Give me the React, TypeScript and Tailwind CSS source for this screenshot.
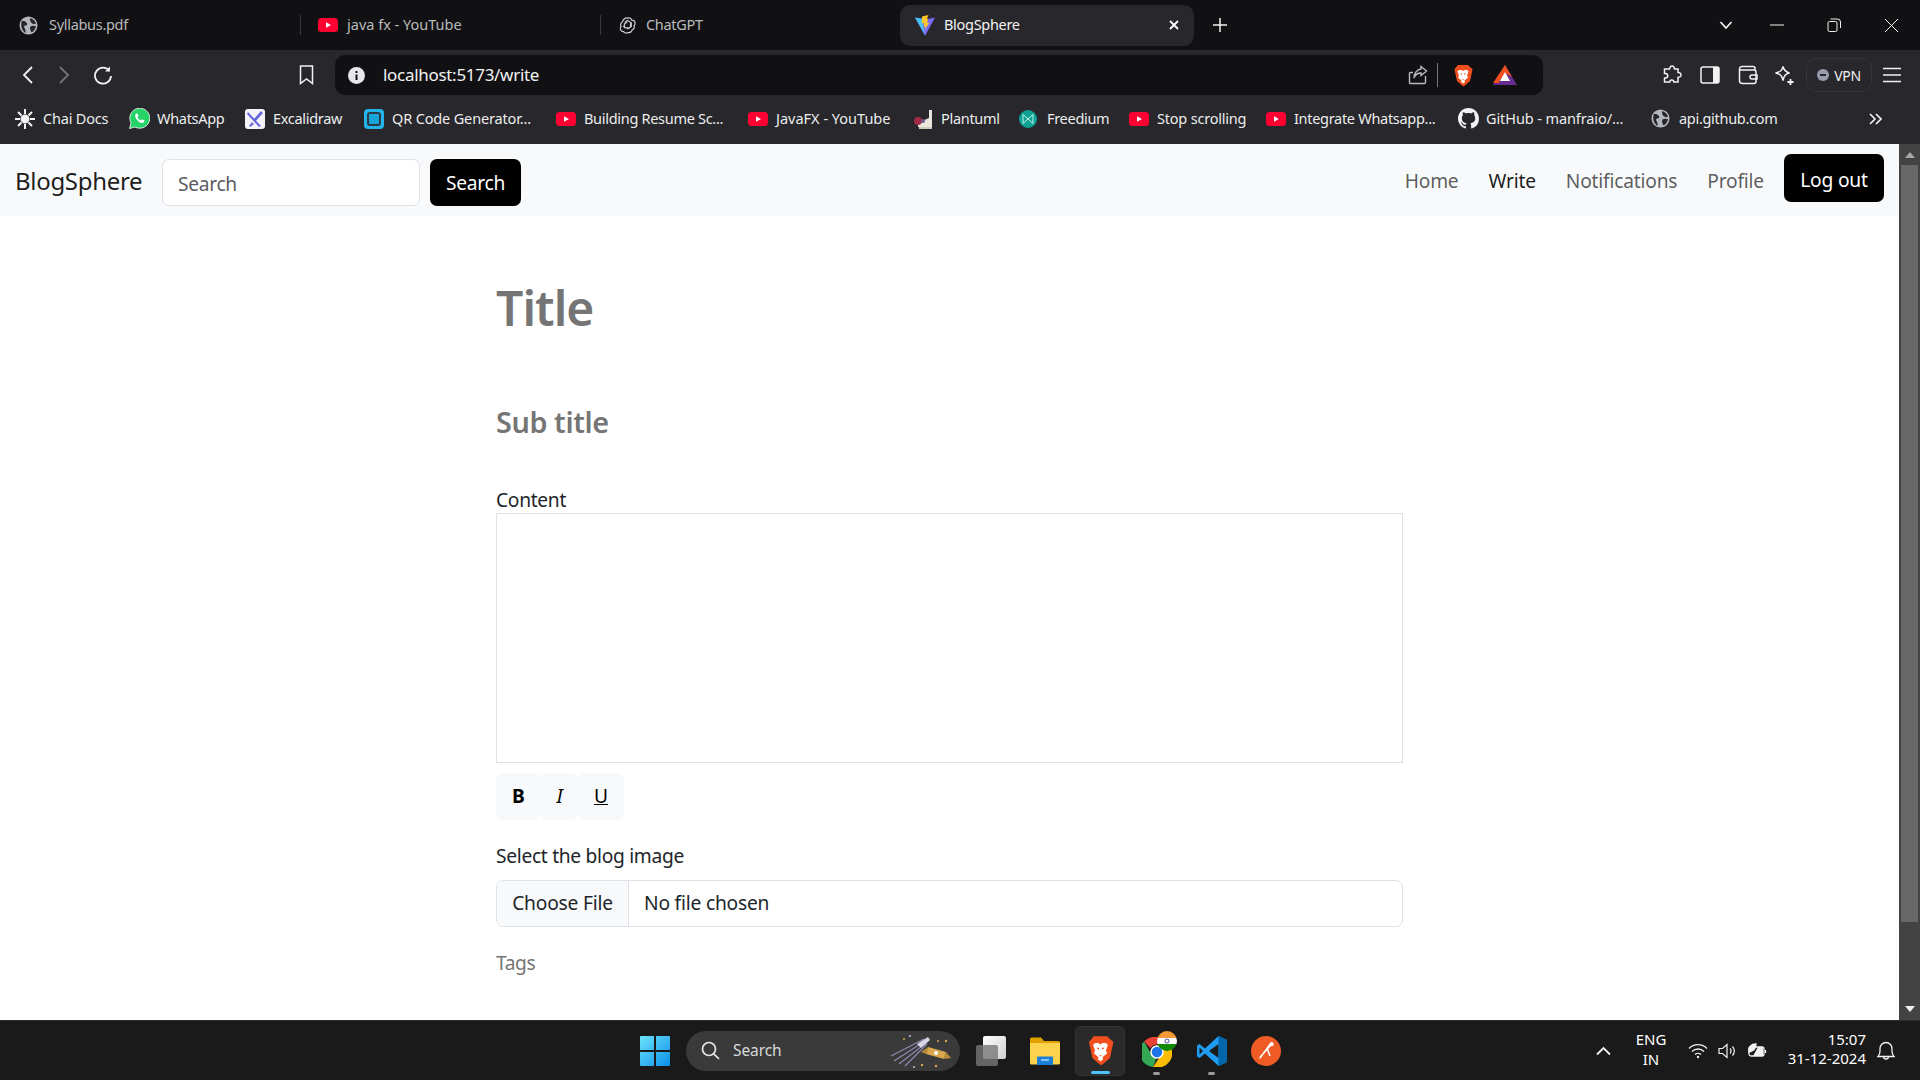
import { ReactNode } from "react";

const ui = "font-['Noto_Sans',sans-serif]";

function YouTube({ size = 20 }: { size?: number }) {
  return (
    <svg width={size} height={size} viewBox="0 0 20 20" className="shrink-0">
      <rect x="0" y="3" width="20" height="14" rx="3.5" fill="#ff0033" />
      <path d="M8 7.2 13 10 8 12.8Z" fill="#fff" />
    </svg>
  );
}

function Globe({ size = 19 }: { size?: number }) {
  return (
    <svg width={size} height={size} viewBox="0 0 20 20" className="shrink-0">
      <circle cx="10" cy="10" r="9.5" fill="#b4b6bb" />
      <path d="M3 5c3 0 4 1 5 2s1 3-1 3-2 2-1 3 1 4 1 5C4 16 1 12 3 5ZM12 2c3 1 5 3 6 6-2 1-4 0-5-1s-2-3-1-5ZM12 11c2-1 4-1 6 0-1 3-3 6-5 6-1-2-2-4-1-6Z" fill="#26272c" />
    </svg>
  );
}

function GptIcon() {
  return (
    <svg width="19" height="19" viewBox="0 0 20 20" fill="none" stroke="#c9cacd" strokeWidth="1.3" className="shrink-0">
      <path d="M10 2.2c2-.6 4 .4 4.6 2.2 2-.1 3.5 1.400 3.300 3.400 0 1-.5 1.800-1 2.300.8 2-.2 4-2 4.600-.5 2-2.400 3.200-4.300 2.700-1.500 1-3.800.6-4.800-1-2 0-3.500-1.600-3.300-3.500 0-.8.3-1.500.7-2-1-1.800-.2-4 1.600-4.800C5.300 3.400 7.800 1.500 10 2.200Z" />
      <path d="M7 6.500 10 4.800l4 2.300v4.500M13.200 7.300v4.400l-3.500 2M12.800 12.600H8L5.300 10.500M6.800 13V8.200l3-1.700" />
    </svg>
  );
}

function ViteIcon() {
  return (
    <svg width="22" height="22" viewBox="0 0 22 22" className="shrink-0">
      <path d="M1 3.500 11 5.500 21 3.500 11.500 21a.6.6 0 0 1-1 0Z" fill="#7c6cf5" />
      <path d="M1 3.500 8 4.800 10.500 20Z" fill="#43c4f5" />
      <path d="M14.500 1 8 2.500l-.3 7 2.500-.5-.7 4 2-1-.5 3.500 4.500-7-2.500.5 1.200-4.500-1.400.3Z" fill="#ffc628" />
    </svg>
  );
}

function BraveIcon({ size = 20 }: { size?: number }) {
  return (
    <svg width={size} height={size * 1.15} viewBox="0 0 20 23" className="shrink-0">
      <path d="M5 1h10l2.500 2.500L19.500 5l-.5 3-.5 2-1.500 7-4 3.500-2.500 2-2.500-2L4 17l-1.500-7L2 8l-.5-3L3 3.500Z" fill="#f1501e" />
      <path d="M6 6h2.500L10 7l1.500-1H14l1.500 1.500-1.500 4 1 2-3.500 3 .5 1.500-2 1.500-2-1.500.5-1.500-3.500-3 1-2-1.500-4Z" fill="#fff" />
      <path d="M7 9.500h2.200L8.500 11ZM13 9.500h-2.200l.7 1.500ZM9 15h2l-1 1Z" fill="#f1501e" />
    </svg>
  );
}

function Bookmark({ icon, label, className, track = "tracking-[-0.3px]" }: { icon: ReactNode; label: string; className: string; track?: string }) {
  return (
    <div className={`flex items-center shrink-0 ${className}`}>
      <div className="w-[28px] flex items-center">{icon}</div>
      <span className={`text-[14.500px] whitespace-nowrap text-[#eceded] ${track}`}>{label}</span>
    </div>
  );
}

function TabBar() {
  return (
    <div className="h-[50px] bg-[#111113] flex items-center shrink-0 text-[14.500px] tracking-[-0.3px]">
      <div className="w-[300px] flex items-center pl-[19px] gap-[11px] text-[#b9babd]">
        <Globe />
        <span>Syllabus.pdf</span>
      </div>
      <div className="w-px h-[20px] bg-[#3a3a3e]" />
      <div className="w-[299px] flex items-center pl-[17px] gap-[9px] text-[#b9babd]">
        <YouTube />
        <span className="tracking-normal">java fx - YouTube</span>
      </div>
      <div className="w-px h-[20px] bg-[#3a3a3e]" />
      <div className="w-[298px] flex items-center pl-[17px] gap-[9px] text-[#b9babd]">
        <GptIcon />
        <span>ChatGPT</span>
      </div>
      <div className="w-[294px] h-[41px] ml-px rounded-[10px] bg-[#27272c] flex items-center pl-[14px] pr-[14px] gap-[8px] text-[#f2f2f3]">
        <ViteIcon />
        <span>BlogSphere</span>
        <svg width="12" height="12" viewBox="0 0 12 12" stroke="#fff" strokeWidth="1.800" className="ml-auto">
          <path d="M2 2l8 8M10 2l-8 8" />
        </svg>
      </div>
      <svg width="16" height="16" viewBox="0 0 16 16" stroke="#f2f2f3" strokeWidth="1.500" className="ml-[18px]">
        <path d="M8 1v14M1 8h14" />
      </svg>
      <div className="ml-auto flex items-center text-[#f2f2f3]">
        <svg width="14" height="10" viewBox="0 0 14 10" fill="none" stroke="currentColor" strokeWidth="1.800">
          <path d="M1.500 2 7 8l5.500-6" />
        </svg>
        <svg width="14" height="2" viewBox="0 0 14 2" stroke="currentColor" className="ml-[37px]">
          <path d="M0 1h14" />
        </svg>
        <svg width="14" height="14" viewBox="0 0 14 14" fill="none" stroke="currentColor" className="ml-[43px]">
          <rect x="1" y="3.500" width="9" height="10" rx="1.500" />
          <path d="M3.500 1h7a3 3 0 0 1 3 3v6" />
        </svg>
        <svg width="15" height="15" viewBox="0 0 15 15" stroke="currentColor" className="ml-[43px] mr-[21px]">
          <path d="M1 1l13 13M14 1 1 14" />
        </svg>
      </div>
    </div>
  );
}

function Toolbar() {
  return (
    <div className="h-[45px] bg-[#27272c] flex items-center shrink-0 pt-[5px]">
      <svg width="12" height="20" viewBox="0 0 12 20" fill="none" stroke="#f2f2f3" strokeWidth="1.800" className="ml-[22px]">
        <path d="M10 2 2 10l8 8" />
      </svg>
      <svg width="12" height="20" viewBox="0 0 12 20" fill="none" stroke="#75767a" strokeWidth="1.800" className="ml-[24px]">
        <path d="M2 2l8 8-8 8" />
      </svg>
      <svg width="20" height="20" viewBox="0 0 20 20" fill="none" stroke="#f2f2f3" strokeWidth="1.800" className="ml-[23px]">
        <path d="M16.500 6A8 8 0 1 0 18 11" />
        <path d="M17 1.500v5h-5" fill="#f2f2f3" strokeWidth="0" />
      </svg>
      <svg width="15" height="20" viewBox="0 0 15 20" fill="none" stroke="#f2f2f3" strokeWidth="1.500" className="ml-[186px]">
        <path d="M1.500 1h12v17.500L7.500 14l-6 4.500Z" />
      </svg>
      <div className="ml-[21px] w-[1208px] h-[40px] bg-[#111113] rounded-[10px] flex items-center pl-[13px] pr-[26px]">
        <svg width="17" height="17" viewBox="0 0 17 17" className="shrink-0">
          <circle cx="8.500" cy="8.500" r="8.500" fill="#e8e8ea" />
          <path d="M7.500 7.500h2V13h-2ZM7.500 4h2v2h-2Z" fill="#111113" />
        </svg>
        <span className="ml-[18px] text-[#f2f2f3] text-[17px] tracking-[-0.3px]">localhost:5173/write</span>
        <svg width="20" height="20" viewBox="0 0 20 20" fill="none" stroke="#b9babd" strokeWidth="1.400" className="ml-auto">
          <path d="M17.500 11v6.500a1 1 0 0 1-1 1H2.500a1 1 0 0 1-1-1V8.500a1 1 0 0 1 1-1H5" />
          <path d="M13 1.500 18.500 6 13 10.500V8c-4 0-6 2-7 5 0-5 3-8.500 7-9Z" />
        </svg>
        <div className="w-px h-[24px] bg-[#77787b] ml-[9px]" />
        <div className="ml-[15px]"><BraveIcon size={20} /></div>
        <svg width="24" height="20" viewBox="0 0 24 20" className="ml-[20px]">
          <path d="M12 0 24 20H0Z" fill="#662d91" />
          <path d="M12 0 19 12 12 8 5.500 18H0Z" fill="#f1501e" />
          <path d="M12 7 17 16H7Z" fill="#fff" />
        </svg>
      </div>
      <svg width="20" height="20" viewBox="0 0 20 20" fill="none" stroke="#f2f2f3" strokeWidth="1.500" className="ml-[119px]">
        <path d="M8 2.500a2.200 2.200 0 0 1 4.200 0l.3 1.500h3.500v3.500l1.500.3a2.200 2.200 0 0 1 0 4.200l-1.500.3v4.700h-4.200a2 2 0 0 0-4 0H2.500v-4h1a2.200 2.200 0 0 0 0-4.500h-1V4h5Z" />
      </svg>
      <svg width="20" height="18" viewBox="0 0 20 18" className="ml-[18px]">
        <rect x="1" y="1" width="18" height="16" rx="2" fill="none" stroke="#f2f2f3" strokeWidth="1.500" />
        <rect x="13" y="1" width="6" height="16" fill="#f2f2f3" />
      </svg>
      <svg width="20" height="20" viewBox="0 0 20 20" fill="none" stroke="#f2f2f3" strokeWidth="1.500" className="ml-[18px]">
        <path d="M17 5V3.500a2 2 0 0 0-2-2H4A2.500 2.500 0 0 0 1.500 4v11.500a3 3 0 0 0 3 3H16a2 2 0 0 0 2-2V7a2 2 0 0 0-2-2H2" />
        <path d="M19 10h-5a2 2 0 0 0 0 4h5Z" />
      </svg>
      <svg width="21" height="21" viewBox="0 0 21 21" fill="none" stroke="#f2f2f3" strokeWidth="1.500" className="ml-[16px]">
        <path d="M9 1.500c.8 4 2.500 5.500 6.500 6.500-4 1-5.500 2.500-6.500 7.500-1-5-2.500-6.500-7.500-7.500C6.500 7 8.200 5.500 9 1.500Z" />
        <path d="M16.500 14v6M13.500 17h6" strokeWidth="1.800" />
      </svg>
      <div className="ml-[11px] w-[66px] h-[34px] rounded-[10px] border border-[#34343a] flex items-center justify-center gap-[5px]">
        <span className="w-[12px] h-[12px] rounded-full bg-[#9a9cae] flex items-center justify-center">
          <span className="w-[6px] h-[2px] bg-[#27272c]" />
        </span>
        <span className="text-[#f2f2f3] text-[14px] tracking-[-0.3px]">VPN</span>
      </div>
      <svg width="20" height="16" viewBox="0 0 20 16" stroke="#f2f2f3" strokeWidth="1.400" className="ml-[10px]">
        <path d="M1 1.500h18M1 8h18M1 14.500h18" />
      </svg>
    </div>
  );
}

function BookmarksBar() {
  return (
    <div className="h-[49px] bg-[#27272c] flex items-center shrink-0 pl-[15px] pb-[2px]">
      <Bookmark
        className="w-[114px]"
        label="Chai Docs"
        track="tracking-[-0.2px]"
        icon={
          <svg width="20" height="20" viewBox="0 0 20 20" stroke="#f2f2f3" strokeWidth="2">
            <path d="M10 0v5M10 15v5M0 10h5M15 10h5M3 3l3.500 3.500M17 3l-3.500 3.500M3 17l3.500-3.500M17 17l-3.500-3.500" />
            <circle cx="10" cy="10" r="3.500" fill="#f2f2f3" />
          </svg>
        }
      />
      <Bookmark
        className="w-[116px]"
        label="WhatsApp"
        icon={
          <svg width="21" height="21" viewBox="0 0 21 21">
            <path d="M.500 20.500 2 15a10 10 0 1 1 4 4Z" fill="#25d366" stroke="#fff" strokeWidth=".8" />
            <path d="M7.500 5.500c-1.500 1-2 2.500-.5 5s4 4.500 6 4.500c1.500 0 2.500-1 2.500-2.500l-2.500-1.200-1 1.200c-1.500-.5-2.800-1.800-3.500-3.300l1-1.200L8.500 5.500Z" fill="#fff" />
          </svg>
        }
      />
      <Bookmark
        className="w-[119px]"
        label="Excalidraw"
        icon={
          <svg width="20" height="20" viewBox="0 0 20 20">
            <rect width="20" height="20" rx="3" fill="#f4f4fb" />
            <path d="M3 3l13 14-2 1L2 5ZM16 2l2 2-8 9-2-2ZM7 13l-3 4 1 1 4-3Z" fill="#6965db" />
          </svg>
        }
      />
      <Bookmark
        className="w-[192px]"
        label="QR Code Generator..."
        track="tracking-[-0.15px]"
        icon={
          <svg width="20" height="20" viewBox="0 0 20 20">
            <rect width="20" height="20" rx="4" fill="#22b4ea" />
            <rect x="4" y="4" width="12" height="12" rx="2" fill="#16a5d8" stroke="#2b3a44" strokeWidth="2" />
          </svg>
        }
      />
      <Bookmark className="w-[192px]" label="Building Resume Sc..." icon={<YouTube />} />
      <Bookmark className="w-[165px]" label="JavaFX - YouTube" track="tracking-normal" icon={<YouTube />} />
      <Bookmark
        className="w-[106px]"
        label="Plantuml"
        icon={
          <svg width="20" height="20" viewBox="0 0 20 20">
            <path d="M16 1h3v17H5v-4l4-2 7-3Z" fill="#e9e6dd" />
            <path d="M6 18h13v2H6Z" fill="#cfcabb" />
            <circle cx="5" cy="12" r="4" fill="#a12c48" />
            <circle cx="10" cy="12" r="2" fill="#6b5a8c" />
          </svg>
        }
      />
      <Bookmark
        className="w-[110px]"
        label="Freedium"
        icon={
          <svg width="18" height="18" viewBox="0 0 18 18" fill="none">
            <circle cx="9" cy="9" r="9" fill="#0ea193" />
            <path d="M4 4.500 9 9l5-4.500v9L9 9l-5 4.500Z" stroke="#c5f1ec" strokeWidth="1" />
          </svg>
        }
      />
      <Bookmark className="w-[137px]" label="Stop scrolling" track="tracking-[-0.2px]" icon={<YouTube />} />
      <Bookmark className="w-[192px]" label="Integrate Whatsapp..." icon={<YouTube />} />
      <Bookmark
        className="w-[193px]"
        label="GitHub - manfraio/..."
        track="tracking-[-0.1px]"
        icon={
          <svg width="21" height="21" viewBox="0 0 16 16" fill="#f2f2f3">
            <path d="M8 0C3.580 0 0 3.580 0 8c0 3.540 2.290 6.530 5.470 7.590.4.070.55-.17.55-.38 0-.19-.01-.82-.01-1.490-2.010.37-2.530-.49-2.690-.94-.09-.23-.48-.94-.82-1.130-.28-.15-.68-.52-.01-.53.63-.01 1.080.58 1.230.82.720 1.210 1.870.87 2.330.66.070-.52.28-.87.510-1.070-1.780-.2-3.640-.89-3.640-3.950 0-.87.31-1.590.82-2.150-.08-.2-.36-1.020.08-2.120 0 0 .67-.21 2.200.82.640-.18 1.320-.27 2-.27s1.360.09 2 .27c1.530-1.040 2.200-.82 2.200-.82.44 1.100.16 1.920.08 2.120.51.560.82 1.270.82 2.150 0 3.070-1.870 3.750-3.650 3.950.29.25.54.73.54 1.480 0 1.070-.01 1.930-.01 2.200 0 .21.150.46.550.38A8.010 8.010 0 0 0 16 8c0-4.420-3.580-8-8-8Z" />
          </svg>
        }
      />
      <Bookmark className="w-[217px]" label="api.github.com" icon={<Globe />} />
      <svg width="14" height="12" viewBox="0 0 14 12" fill="none" stroke="#f2f2f3" strokeWidth="1.600">
        <path d="M2 1l5 5-5 5M8 1l5 5-5 5" />
      </svg>
    </div>
  );
}

function Navbar() {
  return (
    <nav className="h-[72px] bg-[#f8f9fa] flex items-center pl-[15px] pr-[15px] shrink-0 text-[19.200px]">
      <span className="text-[24px] text-black/90 tracking-[-0.3px] w-[147px] mt-[1px]">BlogSphere</span>
      <input
        placeholder="Search"
        className="w-[258px] h-[47px] px-[15px] pt-[1px] bg-white border border-[#dee2e6] rounded-[7px] placeholder:text-[#595c5f] outline-none mt-[5px] tracking-[-0.3px]"
      />
      <button className="ml-[10px] w-[91px] h-[47px] pt-[2px] bg-black text-white rounded-[7px] mt-[5px] tracking-[-0.3px]">Search</button>
      <div className="ml-auto flex items-center -mt-[4px] tracking-[-0.2px]">
        <a className="text-black/65 pt-[6px]">Home</a>
        <a className="ml-[30px] text-black/90 pt-[6px]">Write</a>
        <a className="ml-[30px] text-black/65 pt-[6px]">Notifications</a>
        <a className="ml-[30px] text-black/65 pt-[6px]">Profile</a>
        <button className="ml-[20px] w-[100px] h-[48px] pt-[4px] bg-black text-white rounded-[7px]">Log out</button>
      </div>
    </nav>
  );
}

function WriteForm() {
  return (
    <main className="w-[907px] ml-[496px] text-[#212529] text-[19.200px]">
      <input
        placeholder="Title"
        className="block w-full h-[58px] mt-[63px] outline-none text-[48px] font-semibold placeholder:text-[#757575] tracking-[-0.9px]"
      />
      <input
        placeholder="Sub title"
        className="block w-full h-[40px] mt-[65px] outline-none text-[28.800px] font-semibold placeholder:text-[#757575] tracking-[-0.4px]"
      />
      <div className="mt-[44px] leading-[27px] tracking-[-0.3px]">Content</div>
      <textarea className="block w-full h-[250px] border border-[#dee2e6] outline-none resize-none" />
      <div className="mt-[10px] h-[47px] flex items-stretch text-[19.200px] text-black">
        <button className="w-[45px] bg-[#f8f9fa] rounded-[7px] font-bold">B</button>
        <button className="w-[37px] bg-[#f8f9fa] rounded-[7px] italic">I</button>
        <button className="w-[46px] bg-[#f8f9fa] rounded-[7px] underline">U</button>
      </div>
      <div className="mt-[23px] leading-[26px] tracking-[-0.3px]">Select the blog image</div>
      <div className="mt-[11px] h-[47px] flex items-stretch border border-[#dee2e6] rounded-[7px] overflow-hidden tracking-[-0.2px]">
        <div className="w-[132px] bg-[#f8f9fa] border-r border-[#dee2e6] flex items-center justify-center">Choose File</div>
        <div className="flex items-center pl-[15px]">No file chosen</div>
      </div>
      <div className="mt-[23px] leading-[26px] text-[#757575] tracking-[-0.4px]">Tags</div>
    </main>
  );
}

function Scrollbar() {
  return (
    <div className="w-[21px] bg-[#434343] flex flex-col items-center shrink-0">
      <div className="h-[21px] flex items-center justify-center">
        <svg width="10" height="6" viewBox="0 0 10 6"><path d="M5 0l5 6H0Z" fill="#a8a8a8" /></svg>
      </div>
      <div className="w-[17px] h-[757px] bg-[#686868]" />
      <div className="mt-auto h-[22px] flex items-center justify-center">
        <svg width="10" height="6" viewBox="0 0 10 6"><path d="M5 6l5-6H0Z" fill="#f0f0f0" /></svg>
      </div>
    </div>
  );
}

function Taskbar() {
  return (
    <div className="h-[60px] bg-[#1a1a1a] flex items-center shrink-0 border-t border-[#2c2c2c] text-white">
      <svg width="30" height="30" viewBox="0 0 30 30" className="ml-[640px] shrink-0">
        <defs>
          <linearGradient id="win" x1="0" y1="0" x2="1" y2="1">
            <stop offset="0" stopColor="#6ce4fb" />
            <stop offset="1" stopColor="#0a8fe8" />
          </linearGradient>
        </defs>
        <path d="M0 1a1 1 0 0 1 1-1h13v14H0ZM16 0h13a1 1 0 0 1 1 1v13H16ZM0 16h14v14H1a1 1 0 0 1-1-1ZM16 16h14v13a1 1 0 0 1-1 1H16Z" fill="url(#win)" />
      </svg>
      <div className="ml-[16px] w-[274px] h-[40px] rounded-full bg-[#3a3a3a] flex items-center pl-[15px] pr-[8px] shrink-0">
        <svg width="19" height="19" viewBox="0 0 19 19" fill="none" stroke="#e6e6e6" strokeWidth="1.700">
          <circle cx="8" cy="8" r="6.500" />
          <path d="M12.800 12.800 18 18" />
        </svg>
        <span className="ml-[13px] text-[15.500px] text-[#d9d9d9] tracking-[-0.1px]">Search</span>
        <svg width="62" height="36" viewBox="0 0 62 36" className="ml-auto">
          <path d="M34 6 1 23M35 8 4 28M36 10 9 31M37 11 15 33" stroke="#8f88ad" strokeWidth="1.300" />
          <path d="M27 11 38 4l2 3-9 8Z" fill="#d8d6e6" />
          <path d="M36 21l18 5 2-7-18-5Z" fill="#d9a84e" />
          <path d="M31 19l7-5-2 7ZM54 26l7-1-5-6Z" fill="#b98b3a" />
          <circle cx="46" cy="20" r="2" fill="#fff" />
          <circle cx="14" cy="6" r="1" fill="#d9a84e" />
          <circle cx="20" cy="3" r="1" fill="#c8c0dc" />
          <circle cx="56" cy="8" r="1.200" fill="#d9a84e" />
          <circle cx="48" cy="8" r="1" fill="#d9a84e" />
          <circle cx="24" cy="34" r="1" fill="#c8c0dc" />
          <circle cx="32" cy="32" r="1.200" fill="#d9a84e" />
          <circle cx="46" cy="33" r="1.200" fill="#d9a84e" />
        </svg>
      </div>
      <div className="ml-[16px] relative w-[30px] h-[30px] shrink-0">
        <div className="absolute left-[7px] top-0 w-[23px] h-[23px] rounded-[2px] bg-gradient-to-br from-white to-[#cfcfcf]" />
        <div className="absolute left-0 top-[9px] w-[22px] h-[21px] rounded-[2px] bg-[#777]/80" />
      </div>
      <svg width="30" height="28" viewBox="0 0 30 28" className="ml-[24px] shrink-0">
        <path d="M0 2a1.500 1.500 0 0 1 1.500-1.500H11L14 4h14.500A1.500 1.500 0 0 1 30 5.500V8H0Z" fill="#e0a100" />
        <path d="M0 6h30v20a1.500 1.500 0 0 1-1.500 1.500h-27A1.500 1.500 0 0 1 0 26Z" fill="#fdd34d" />
        <path d="M8 19.500h14a1 1 0 0 1 1 1V28H7v-7.500a1 1 0 0 1 1-1Z" fill="#1c7fd6" />
        <path d="M11 23h8" stroke="#a4d6ff" strokeWidth="1.500" />
      </svg>
      <div className="ml-[15px] relative w-[50px] h-[50px] rounded-[5px] bg-[#2a2a2a] border border-[#333] flex items-center justify-center shrink-0">
        <BraveIcon size={27} />
        <div className="absolute bottom-[1px] left-[15px] w-[19px] h-[3px] rounded-full bg-[#4cc2ff]" />
      </div>
      <div className="ml-[17px] relative w-[30px] h-[50px] flex items-center shrink-0">
        <svg width="30" height="30" viewBox="0 0 30 30" className="mt-[2px]">
          <path d="M15 0a15 15 0 0 1 13 7.500H15a7.500 7.500 0 0 0-6.500 3.750L2 4.500A15 15 0 0 1 15 0Z" fill="#ea4335" />
          <path d="M2 4.500l6.500 11.250a7.500 7.500 0 0 0 6.500 3.750L11 30A15 15 0 0 1 2 4.500Z" fill="#34a853" />
          <path d="M28 7.500A15 15 0 0 1 11 30l8-12a7.500 7.500 0 0 0 0-10.500Z" fill="#fbbc04" />
          <circle cx="15" cy="15" r="6" fill="#1a73e8" stroke="#fff" strokeWidth="1.500" />
        </svg>
        <svg width="20" height="20" viewBox="0 0 20 20" className="absolute -right-[5px] top-[5px]">
          <clipPath id="flag"><circle cx="10" cy="10" r="10" /></clipPath>
          <g clipPath="url(#flag)">
            <rect width="20" height="7" fill="#f39a36" />
            <rect y="7" width="20" height="6" fill="#fff" />
            <rect y="13" width="20" height="7" fill="#128807" />
            <circle cx="10" cy="10" r="2" fill="none" stroke="#000080" strokeWidth=".7" />
          </g>
        </svg>
        <div className="absolute bottom-[1px] left-[11px] w-[7px] h-[3px] rounded-full bg-[#9b9b9b]" />
      </div>
      <div className="ml-[25px] relative w-[30px] h-[50px] flex items-center shrink-0">
        <svg width="30" height="30" viewBox="0 0 30 30">
          <path d="M21.500 0 30 4v22l-8.500 4L8 17.500 2.500 22 0 20.500V9.500L2.500 8 8 12.500Z" fill="#1f9cf0" />
          <path d="M21.500 8 12 15l9.500 7ZM2.500 11.500v7L6 15Z" fill="#1a1a1a" />
          <path d="M21.500 0 30 4v22l-8.500 4Z" fill="#0065a9" />
        </svg>
        <div className="absolute bottom-[1px] left-[11px] w-[7px] h-[3px] rounded-full bg-[#9b9b9b]" />
      </div>
      <svg width="30" height="30" viewBox="0 0 30 30" className="ml-[24px] shrink-0">
        <circle cx="15" cy="15" r="15" fill="#ef5b25" />
        <path d="M19 7a2 2 0 1 1 1 3L12 19l-2 3-2 1 1-3 2-2Z" fill="#fff" />
        <path d="M16 12l3 8" stroke="#fff" strokeWidth="1.500" />
      </svg>
      <div className="ml-auto flex items-center shrink-0">
        <svg width="15" height="10" viewBox="0 0 15 10" fill="none" stroke="#f2f2f2" strokeWidth="1.800">
          <path d="M1 8.500 7.500 2 14 8.500" />
        </svg>
        <div className="ml-[20px] w-[40px] text-center text-[15px] leading-[20px] pb-[3px]">
          <div>ENG</div>
          <div>IN</div>
        </div>
        <svg width="20" height="16" viewBox="0 0 20 16" fill="none" stroke="#f2f2f2" strokeWidth="1.300" className="ml-[17px]">
          <path d="M1 5.500a12.500 12.500 0 0 1 18 0M4 8.500a8.500 8.500 0 0 1 12 0M7 11.500a4.300 4.300 0 0 1 6 0" />
          <circle cx="10" cy="14" r="1.200" fill="#f2f2f2" stroke="none" />
        </svg>
        <svg width="20" height="16" viewBox="0 0 20 16" fill="none" stroke="#f2f2f2" strokeWidth="1.200" className="ml-[10px]">
          <path d="M1 5.500h3.500L9 1.500v13l-4.500-4H1Z" />
          <path d="M12 5.500a3.500 3.500 0 0 1 0 5M14.500 3.500a6.500 6.500 0 0 1 0 9" />
        </svg>
        <svg width="20" height="16" viewBox="0 0 20 16" fill="none" stroke="#f2f2f2" strokeWidth="1.300" className="ml-[9px]">
          <rect x="2" y="4" width="15" height="9" rx="2" />
          <path d="M18.500 7v3" />
          <path d="M2 9C1 4 4 1 9 1c0 4-2 7-7 8Z" fill="#f2f2f2" />
          <path d="M6 13l5-9h5v9Z" fill="#f2f2f2" stroke="none" />
        </svg>
        <div className="ml-[19px] w-[80px] text-right text-[15px] leading-[19px] pb-[3px]">
          <div>15:07</div>
          <div className="whitespace-nowrap">31-12-2024</div>
        </div>
        <svg width="18" height="20" viewBox="0 0 18 20" fill="none" stroke="#f2f2f2" strokeWidth="1.300" className="ml-[11px] mr-[25px]">
          <path d="M1 15.500c1.500-1.500 2-3 2-5.500V7.500a6 6 0 0 1 12 0V10c0 2.500.5 4 2 5.500Z" />
          <path d="M6.500 15.500a2.500 2.500 0 0 0 5 0" />
        </svg>
      </div>
    </div>
  );
}

export default function App() {
  return (
    <div className={`h-screen w-screen overflow-hidden flex flex-col bg-white ${ui}`}>
      <TabBar />
      <Toolbar />
      <BookmarksBar />
      <div className="flex-1 flex min-h-0">
        <div className="flex-1 min-w-0 overflow-hidden">
          <Navbar />
          <WriteForm />
        </div>
        <Scrollbar />
      </div>
      <Taskbar />
    </div>
  );
}
